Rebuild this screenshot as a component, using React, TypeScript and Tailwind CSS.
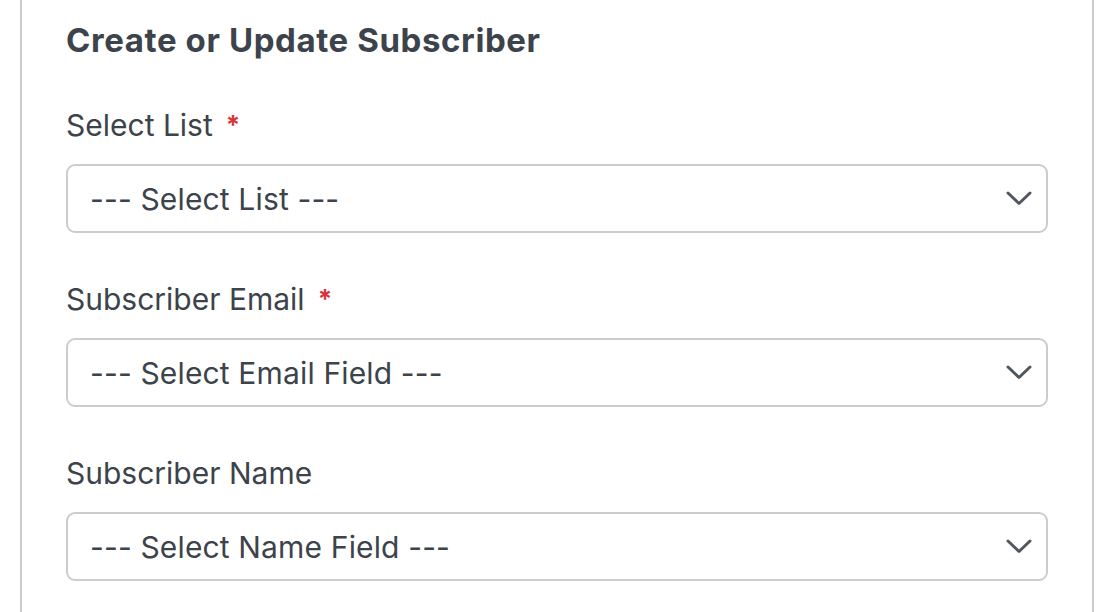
import React from "react";

const Chevron = () => (
  <svg width="26" height="15" viewBox="0 0 26 15" fill="none" className="shrink-0">
    <polyline points="2,2 13,12.5 24,2" stroke="#50575e" strokeWidth="3" strokeLinecap="round" strokeLinejoin="round" />
  </svg>
);

function Field({ label, required, placeholder, first }: { label: string; required?: boolean; placeholder: string; first?: boolean }) {
  return (
    <div className={first ? "mt-[47px]" : "mt-[48px]"}>
      <div className="text-[30px] leading-[36px] text-[#3c434a] flex items-start">
        <span>{label}</span>
        {required && <span className="ml-[13px] text-[#d63638] font-bold text-[26px] leading-[36px]">*</span>}
      </div>
      <div className="mt-[21px] h-[69px] w-full border-2 border-[#cccccc] rounded-[9px] bg-white flex items-center justify-between pl-[22px] pr-[14px]">
        <span className="text-[30px] leading-[36px] tracking-[0.15px] text-[#3c434a]">{placeholder}</span>
        <Chevron />
      </div>
    </div>
  );
}

export default function App() {
  return (
    <div className="w-[1116px] h-[612px] overflow-hidden bg-white" style={{ fontFamily: "Inter, 'Noto Sans', sans-serif" }}>
      <div className="ml-[20px] w-[1074px] min-h-[612px] border-x-2 border-[#cccccc] px-[44px] pt-[20px]">
        <h2 className="text-[33px] leading-[40px] font-bold tracking-[0.6px] text-[#3c434a]">Create or Update Subscriber</h2>
        <Field first label="Select List" required placeholder="--- Select List ---" />
        <Field label="Subscriber Email" required placeholder="--- Select Email Field ---" />
        <Field label="Subscriber Name" placeholder="--- Select Name Field ---" />
      </div>
    </div>
  );
}
